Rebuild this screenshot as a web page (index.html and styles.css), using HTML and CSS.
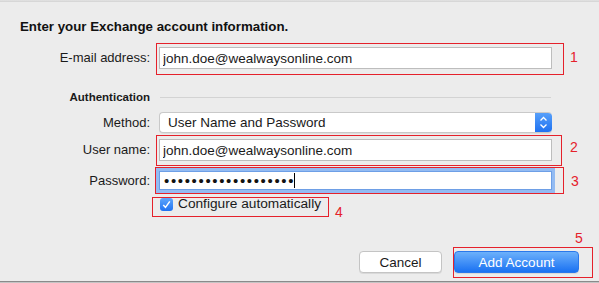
FILE: index.html
```html
<!DOCTYPE html>
<html>
	<head>
		<title>Exchange account</title>
		<link rel="stylesheet" href="styles.css">
	</head>
	<body>
		<div class="sheet">
			<div class="edge-top"></div>
			<h1 class="title">Enter your Exchange account information.</h1>

			<div class="row row-email">
				<label class="label" for="email">E-mail address:</label>
				<div class="mark mark-1">
					<input class="field" id="email" type="text" value="john.doe@wealwaysonline.com">
					<span class="num">1</span>
				</div>
			</div>

			<div class="row row-section">
				<span class="label label-bold">Authentication</span>
				<div class="rule"></div>
			</div>

			<div class="row row-method">
				<span class="label">Method:</span>
				<div class="popup">
					<span class="popup-text">User Name and Password</span>
					<span class="stepper">
						<svg width="17" height="21" viewBox="0 0 17 21">
							<path d="M5.5 8.5 8.5 5.5 11.5 8.5" fill="none" stroke="#fff" stroke-width="1.3"/>
							<path d="M5.5 12.5 8.5 15.5 11.5 12.5" fill="none" stroke="#fff" stroke-width="1.3"/>
						</svg>
					</span>
				</div>
			</div>

			<div class="row row-user">
				<label class="label" for="user">User name:</label>
				<div class="mark mark-2">
					<input class="field" id="user" type="text" value="john.doe@wealwaysonline.com">
					<span class="num">2</span>
				</div>
			</div>

			<div class="row row-pass">
				<span class="label">Password:</span>
				<div class="mark mark-3">
					<div class="field field-focus"><span class="dots">•••••••••••••••••••</span><span class="caret"></span></div>
					<span class="num">3</span>
				</div>
			</div>

			<div class="row row-check">
				<span class="label"></span>
				<div class="mark mark-4">
					<span class="checkbox">
						<svg width="13" height="13" viewBox="0 0 13 13">
							<path d="M3.3 6.9 5.5 9.4 9.8 3.4" fill="none" stroke="#fff" stroke-width="1.5"/>
						</svg>
					</span>
					<span class="check-text">Configure automatically</span>
					<span class="num">4</span>
				</div>
			</div>

			<div class="buttons">
				<button class="btn">Cancel</button>
				<div class="mark mark-5">
					<button class="btn btn-primary">Add Account</button>
					<span class="num">5</span>
				</div>
			</div>

			<div class="edge-bottom"></div>
		</div>
	</body>
</html>
```

FILE: styles.css
```css
html, body{
	margin: 0;
	padding: 0;
	background: #ececec;
}
body{
	width: 599px;
	height: 283px;
	overflow: hidden;
	font-family: "Liberation Sans", Arial, sans-serif;
	font-size: 13px;
	color: #1a1a1a;
}
.edge-top{
	height: 2px;
	background: linear-gradient(#e4e4e4, #d3d3d3);
}
.title{
	margin: 17px 0 0 20px;
	font-size: 13.3px;
	line-height: 16px;
	font-weight: bold;
	color: #111;
}
.row{
	display: flex;
	align-items: center;
}
.label{
	flex: none;
	width: 150px;
	text-align: right;
	line-height: 16px;
}
.label-bold{
	font-weight: bold;
	font-size: 11.5px;
}
.row-email{
	margin-top: 12px;
}
.row-section{
	margin-top: 20px;
	height: 16px;
}
.row-method{
	margin-top: 7px;
}
.row-user{
	margin-top: 6px;
}
.row-pass{
	margin-top: 10px;
}
.row-check{
	margin-top: 6px;
	height: 16px;
}

/* fields */
.mark{
	position: relative;
	margin-left: 9px;
}
.field{
	display: block;
	box-sizing: border-box;
	width: 393px;
	height: 22px;
	margin: 0;
	padding: 0 0 0 3px;
	border: 1px solid #bdbdbd;
	background: #fff;
	font-family: "Liberation Sans", Arial, sans-serif;
	font-size: 13.5px;
	color: #1a1a1a;
	outline: none;
}
.field-focus{
	height: 19px;
	display: flex;
	align-items: center;
	padding-left: 4px;
	border-color: #6e9fe6;
	box-shadow: 0 0 0 3px #93bbf2;
}
.dots{
	font-size: 15px;
	letter-spacing: 1.65px;
	line-height: 17px;
	color: #111;
}
.caret{
	width: 1px;
	height: 15px;
	margin-left: -1px;
	background: #000;
}
.rule{
	margin-left: 10px;
	width: 391px;
	height: 1px;
	background: #d3d3d3;
}
.popup{
	margin-left: 9px;
	box-sizing: border-box;
	width: 393px;
	height: 21px;
	display: flex;
	align-items: center;
	border: 1px solid #c9c9c9;
	border-right: none;
	border-radius: 4px;
	background: #fff;
	box-shadow: 0 1px 0 rgba(0,0,0,0.06);
	overflow: hidden;
}
.popup-text{
	flex: 1;
	padding-left: 8px;
	font-size: 13.5px;
}
.stepper{
	width: 17px;
	height: 21px;
	margin-top: -1px;
	margin-bottom: -1px;
	background: linear-gradient(#5aa2fa, #1b6ff1);
	border-radius: 0 4px 4px 0;
}
.stepper svg{
	display: block;
}

/* checkbox */
.mark-4{
	margin-left: 10px;
	display: flex;
	align-items: center;
	height: 16px;
}
.checkbox{
	width: 13px;
	height: 13px;
	border-radius: 3px;
	background: linear-gradient(#5ea6fb, #1f72f2);
}
.checkbox svg{
	display: block;
}
.check-text{
	margin-left: 5px;
	font-size: 13.7px;
	line-height: 16px;
}

/* buttons */
.buttons{
	margin-top: 39px;
	display: flex;
	justify-content: flex-end;
	gap: 12px;
	padding-right: 20px;
}
.btn{
	box-sizing: border-box;
	height: 22px;
	margin: 0;
	padding: 0;
	border: 1px solid #c4c4c4;
	border-radius: 4px;
	background: #fff;
	box-shadow: 0 1px 0 rgba(0,0,0,0.08);
	font-family: "Liberation Sans", Arial, sans-serif;
	font-size: 13.5px;
	color: #1a1a1a;
	width: 83px;
}
.btn-primary{
	width: 125px;
	border-color: #2a78ea;
	background: linear-gradient(#6cb1fb, #1a71f2);
	color: #fff;
}
.mark-5{
	margin-left: 0;
}

/* red annotations */
.mark::after{
	content: "";
	position: absolute;
	border: 1px solid #e5212b;
	pointer-events: none;
}
.num{
	position: absolute;
	font-size: 14px;
	line-height: 16px;
	color: #e5212b;
}
.mark-1::after{ top: -4px; left: -3px; right: -12px; bottom: -6px; }
.mark-1 .num{ left: 411px; top: 2px; }
.mark-2::after{ top: -4px; left: -3px; right: -10px; bottom: -5px; }
.mark-2 .num{ left: 411px; top: 0; }
.mark-3::after{ top: -4px; left: -4px; right: -12px; bottom: -4px; }
.mark-3 .num{ left: 412px; top: 2px; }
.mark-4::after{ top: 1px; left: -8px; right: -8px; bottom: -5px; }
.mark-4 .num{ left: 175px; top: 8px; }
.mark-5::after{ top: -4px; left: -1px; right: -14px; bottom: -5px; }
.mark-5 .num{ left: 121px; top: -21px; }

.edge-bottom{
	margin-top: 8px;
	height: 1px;
	background: #8a8a8a;
	border-bottom: 1px solid #c4c4c4;
}
```
